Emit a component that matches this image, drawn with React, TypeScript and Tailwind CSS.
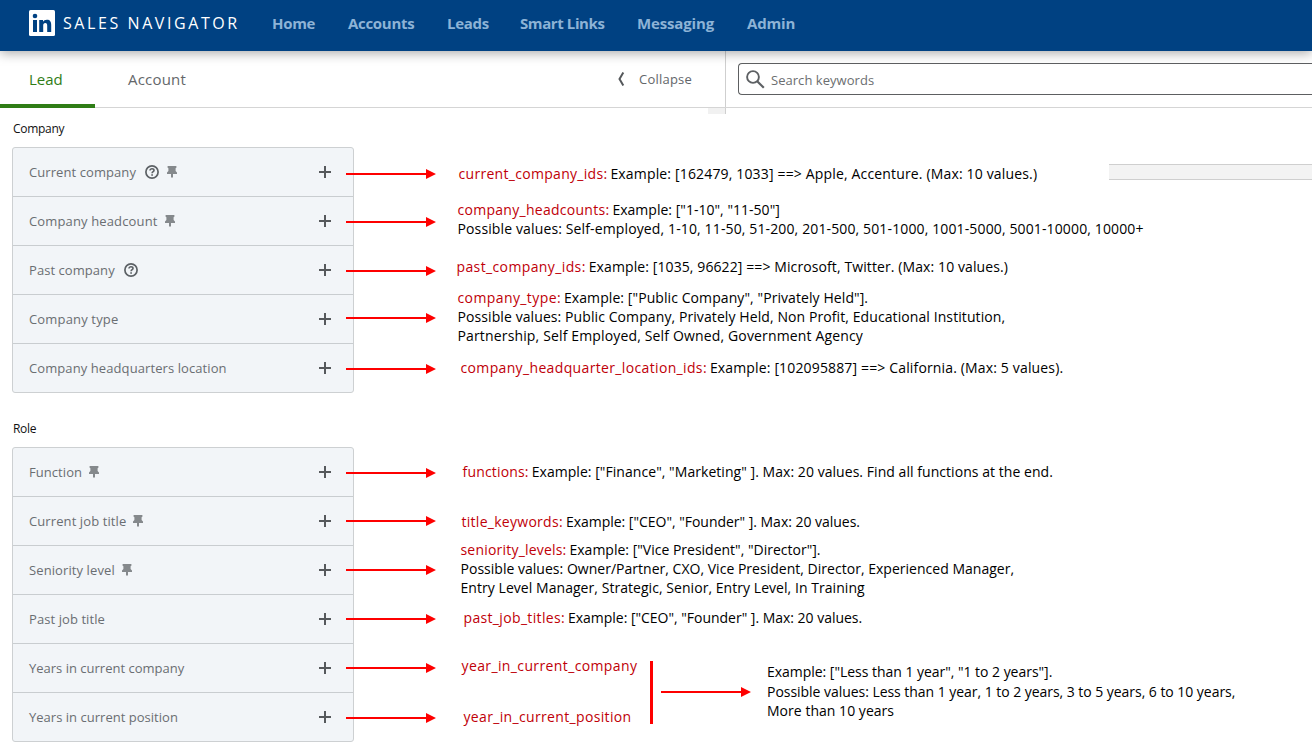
import type { ReactNode } from "react";

type Filter = { label: string; tracking: string; help?: boolean; pin?: boolean };

const companyFilters: Filter[] = [
  { label: "Current company", tracking: "tracking-[0.08px]", help: true, pin: true },
  { label: "Company headcount", tracking: "tracking-[0.14px]", pin: true },
  { label: "Past company", tracking: "tracking-[0.06px]", help: true },
  { label: "Company type", tracking: "tracking-[0.16px]" },
  { label: "Company headquarters location", tracking: "tracking-[0.09px]" },
];

const roleFilters: Filter[] = [
  { label: "Function", tracking: "tracking-[0.06px]", pin: true },
  { label: "Current job title", tracking: "tracking-[0.1px]", pin: true },
  { label: "Seniority level", tracking: "tracking-[0.1px]", pin: true },
  { label: "Past job title", tracking: "tracking-[0.08px]" },
  { label: "Years in current company", tracking: "tracking-[0px]" },
  { label: "Years in current position", tracking: "tracking-[0.02px]" },
];

const arrowRows = [174, 222, 271, 318, 369, 473, 521, 570, 619, 668, 718];

function HelpIcon() {
  return (
    <svg className="ml-[9px] size-[14px] shrink-0" viewBox="0 0 14 14" fill="none" stroke="#5c6165">
      <circle cx="7" cy="7" r="6.1" strokeWidth="1.7" />
      <path d="M5 5.6C5 4.4 5.9 3.8 7 3.8s2 .6 2 1.6C9 6.7 7.1 6.7 7.1 8.3" strokeWidth="1.6" />
      <path d="M7.1 9.2v1.6" strokeWidth="1.7" />
    </svg>
  );
}

function PinIcon({ className }: { className: string }) {
  return (
    <svg className={`h-3 w-2.5 shrink-0 ${className}`} viewBox="0 0 10 12" fill="#85898c">
      <path d="M.6 0h8.800v1.700l-.8.5v2.900L10 6.400V8H6v3l-1 1-1-1V8H0V6.400l1.400-1.300V2.200l-.8-.5z" />
    </svg>
  );
}

function PlusIcon() {
  return (
    <svg className="ml-auto size-3 shrink-0" viewBox="0 0 12 12" fill="#56595c">
      <path d="M5 0h2v5h5v2H7v5H5V7H0V5h5z" />
    </svg>
  );
}

function FilterGroup({ title, filters }: { title: string; filters: Filter[] }) {
  return (
    <section className="flex flex-col">
      <h2 className="flex h-[39px] items-center pt-[3px] pl-px text-[12px] tracking-[-0.3px] text-[#111]">{title}</h2>
      <ul className="divide-y divide-[#c9cdd0] rounded-[3px] border border-[#cdd0d2] bg-[#f2f5f8]">
        {filters.map((f) => (
          <li key={f.label} className="flex h-[49px] items-center pr-[22px] pl-4 last:h-12">
            <span className={`pt-[2px] text-[13px] whitespace-nowrap text-[#6a6e72] ${f.tracking}`}>{f.label}</span>
            {f.help && <HelpIcon />}
            {f.pin && <PinIcon className={f.help ? "ml-2" : "ml-[7px]"} />}
            <PlusIcon />
          </li>
        ))}
      </ul>
    </section>
  );
}

function Arrow({ x, y }: { x: number; y: number }) {
  return <path d={`M${x} ${y - 1}h80v-4l10 5l-10 5v-4h-80z`} />;
}

function Param({ children, className }: { children: ReactNode; className: string }) {
  return <span className={`mr-[3px] text-[#c00008] ${className}`}>{children}</span>;
}

function Note({ className, children }: { className: string; children: ReactNode }) {
  return <div className={`flex flex-col leading-[19px] whitespace-nowrap ${className}`}>{children}</div>;
}

export default function App() {
  return (
    <div className="relative flex h-[750px] w-[1312px] flex-col overflow-hidden bg-white font-['Open_Sans','Noto_Sans',sans-serif]">
      <header className="z-10 flex h-[51px] shrink-0 items-center bg-[#004182] pb-[5px] pl-[29px] shadow-[0_2px_11px_rgba(0,0,0,0.35)]">
        <svg className="size-[26px] shrink-0" viewBox="0 0 26 26">
          <rect width="26" height="26" rx="1.5" fill="#fff" />
          <g fill="#004182">
            <circle cx="6" cy="6" r="2.3" />
            <path d="M4 10h4v12H4zM10.200 10H14v1.700c.7-1.200 2-2 3.900-2 3.300 0 4.300 2.100 4.300 5.100V22h-4v-6.300c0-1.600-.4-2.700-1.900-2.700s-2.100 1.100-2.100 2.700V22h-4z" />
          </g>
        </svg>
        <span className="ml-[8px] w-[179px] text-[16px] tracking-[2.58px] whitespace-nowrap text-white">SALES NAVIGATOR</span>
        <nav className="ml-[30px] flex text-[15px] font-bold whitespace-nowrap text-[#8db3d6]">
          <a className="w-[76px] tracking-[-0.3px]">Home</a>
          <a className="w-[99px] tracking-[-0.3px]">Accounts</a>
          <a className="w-[73px] tracking-[-0.3px]">Leads</a>
          <a className="w-[117px] tracking-[-0.4px]">Smart Links</a>
          <a className="w-[110px] tracking-[-0.15px]">Messaging</a>
          <a className="tracking-[-0.15px]">Admin</a>
        </nav>
      </header>

      <div className="flex h-[57px] shrink-0 border-b border-[#d5d5d5]">
        <div className="relative flex w-[726px] items-stretch border-r border-[#cfcfcf]">
          <div className="-mb-px flex w-[95px] items-center border-b-4 border-[#2f7d16] pt-1 pl-[29px] text-[15px] font-medium text-[#2f7d16]">Lead</div>
          <div className="flex items-center pl-[33px] text-[15px] font-medium tracking-[0.2px] text-[#64676a]">Account</div>
          <div className="ml-auto flex items-center pr-[33px] text-[13px] tracking-[0.22px] text-[#63666a]">
            <svg className="mr-[13px] h-[14px] w-2" viewBox="0 0 8 14" fill="none" stroke="#55585b" strokeWidth="2">
              <path d="M5.300.5 1.500 7l3.800 6.500" />
            </svg>
            <span className="pt-[2px]">Collapse</span>
          </div>
          <div className="absolute top-[57px] -right-px h-[6px] w-[18px] border-r border-[#cfcfcf] bg-[#f1f1f1]" />
        </div>
        <div className="ml-3 flex h-8 flex-1 items-center self-center rounded-l-[4px] border border-r-0 border-[#5d5f61] pl-[7px]">
          <svg className="size-[19px] shrink-0" viewBox="0 0 19 19" fill="none" stroke="#5d6063" strokeWidth="1.9">
            <circle cx="7" cy="7" r="5.900" />
            <path d="m11.200 11.200 6.600 6.600" strokeWidth="2.200" />
          </svg>
          <span className="ml-[6px] pt-[3px] text-[13px] tracking-[0.04px] text-[#6b6e70]">Search keywords</span>
        </div>
      </div>

      <main className="flex flex-1">
        <aside className="flex w-[354px] shrink-0 flex-col gap-[15px] pl-3">
          <FilterGroup title="Company" filters={companyFilters} />
          <FilterGroup title="Role" filters={roleFilters} />
        </aside>

        <div className="flex flex-1 flex-col pl-[103.500px] text-[14px] text-black">
          <div className="mt-14 flex h-[19px] items-start">
            <Note className="pl-px">
              <p>
                <Param className="tracking-[0.3px]">current_company_ids:</Param>
                <span className="tracking-[0.16px]">Example: [162479, 1033] ==&gt; Apple, Accenture. (Max: 10 values.)</span>
              </p>
            </Note>
            <div className="ml-auto h-4 w-[203px] border-y border-[#cfcfcf] bg-[#f3f3f3]" />
          </div>
          <Note className="mt-[17px]">
            <p>
              <Param className="tracking-[0.28px]">company_headcounts:</Param>
              <span className="tracking-[0.02px]">Example: ["1-10", "11-50"]</span>
            </p>
            <p className="tracking-[0.13px]">
              Possible values: Self-employed, 1-10, 11-50, 51-200, 201-500, 501-1000, 1001-5000, 5001-10000, 10000+
            </p>
          </Note>
          <Note className="mt-[19px] -ml-px">
            <p>
              <Param className="tracking-[0.38px]">past_company_ids:</Param>
              <span className="tracking-[0.1px]">Example: [1035, 96622] ==&gt; Microsoft, Twitter. (Max: 10 values.)</span>
            </p>
          </Note>
          <Note className="mt-3">
            <p>
              <Param className="tracking-[0.4px]">company_type:</Param>
              <span className="tracking-[0.08px]">Example: ["Public Company", "Privately Held"].</span>
            </p>
            <p className="tracking-[0.09px]">Possible values: Public Company, Privately Held, Non Profit, Educational Institution,</p>
            <p className="tracking-[0.15px]">Partnership, Self Employed, Self Owned, Government Agency</p>
          </Note>
          <Note className="mt-[13px] pl-[3px]">
            <p>
              <Param className="tracking-[0.35px]">company_headquarter_location_ids:</Param>
              <span className="tracking-[0.15px]">Example: [102095887] ==&gt; California. (Max: 5 values).</span>
            </p>
          </Note>
          <Note className="mt-[85px] pl-[5px]">
            <p>
              <Param className="tracking-[0.17px]">functions:</Param>
              <span className="tracking-[0.05px]">Example: ["Finance", "Marketing" ]. Max: 20 values. Find all functions at the end.</span>
            </p>
          </Note>
          <Note className="mt-[31px] pl-1">
            <p>
              <Param className="tracking-[0.28px]">title_keywords:</Param>
              <span className="tracking-[-0.02px]">Example: ["CEO", "Founder" ]. Max: 20 values.</span>
            </p>
          </Note>
          <Note className="mt-[9px] pl-[3px]">
            <p>
              <Param className="tracking-[0.2px]">seniority_levels:</Param>
              <span>Example: ["Vice President", "Director"].</span>
            </p>
            <p className="tracking-[0.02px]">Possible values: Owner/Partner, CXO, Vice President, Director, Experienced Manager,</p>
            <p className="tracking-[0.05px]">Entry Level Manager, Strategic, Senior, Entry Level, In Training</p>
          </Note>
          <Note className="mt-[11px] pl-1.5">
            <p>
              <Param className="tracking-[0.34px]">past_job_titles:</Param>
              <span className="tracking-[-0.02px]">Example: ["CEO", "Founder" ]. Max: 20 values.</span>
            </p>
          </Note>
          <div className="mt-[29px] flex items-start">
            <Note className="w-[192.500px] gap-8 pl-1">
              <Param className="tracking-[0.38px]">year_in_current_company</Param>
              <Param className="pl-0.5 tracking-[0.34px]">year_in_current_position</Param>
            </Note>
            <div className="mt-[5px] h-[63px] w-[3px] bg-[#fe0000]" />
            <div className="mt-[6px] ml-[114px] leading-[19.5px] whitespace-nowrap">
              <p className="tracking-[-0.03px]">Example: ["Less than 1 year", "1 to 2 years"].</p>
              <p className="tracking-[-0.04px]">Possible values: Less than 1 year, 1 to 2 years, 3 to 5 years, 6 to 10 years,</p>
              <p className="tracking-[0.03px]">More than 10 years</p>
            </div>
          </div>
        </div>
      </main>

      <svg className="pointer-events-none absolute inset-0" width="1312" height="750" fill="#fe0000">
        {arrowRows.map((y) => (
          <Arrow key={y} x={346} y={y} />
        ))}
        <Arrow x={661} y={692} />
      </svg>
    </div>
  );
}
